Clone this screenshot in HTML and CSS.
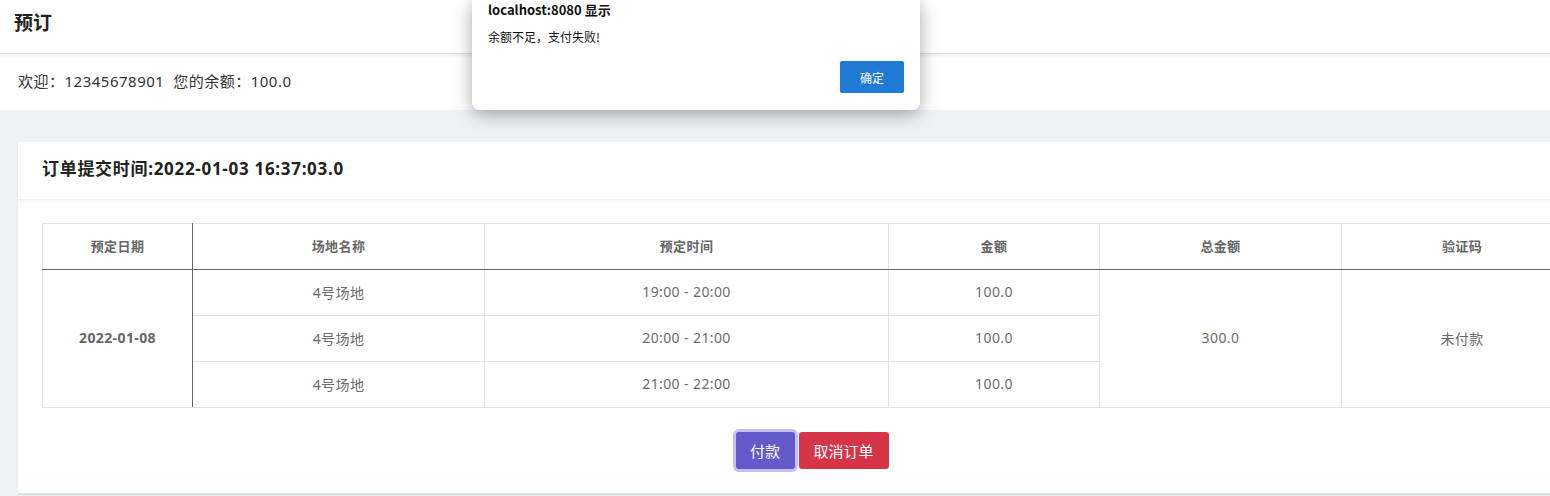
FILE: index.html
```html
<!DOCTYPE html>
<html lang="zh">
<head>
<meta charset="utf-8">
<title>预订</title>
<link rel="stylesheet" href="styles.css">
</head>
<body>
<div class="page">
  <header class="topbar"><h1 class="topbar-title">预订</h1></header>
  <div class="welcome">欢迎：12345678901&nbsp;&nbsp;您的余额：100.0</div>
  <main class="content">
    <section class="card">
      <div class="card-header"><h2 class="card-title">订单提交时间:2022-01-03 16:37:03.0</h2></div>
      <div class="card-body">
        <table class="orders">
          <colgroup>
            <col class="c1"><col class="c2"><col class="c3"><col class="c4"><col class="c5"><col class="c6">
          </colgroup>
          <thead>
            <tr><th class="first">预定日期</th><th>场地名称</th><th>预定时间</th><th>金额</th><th>总金额</th><th>验证码</th></tr>
          </thead>
          <tbody>
            <tr>
              <td rowspan="3" class="first date">2022-01-08</td>
              <td>4号场地</td><td>19:00 - 20:00</td><td>100.0</td>
              <td rowspan="3">300.0</td><td rowspan="3">未付款</td>
            </tr>
            <tr><td>4号场地</td><td>20:00 - 21:00</td><td>100.0</td></tr>
            <tr><td>4号场地</td><td>21:00 - 22:00</td><td>100.0</td></tr>
          </tbody>
        </table>
        <div class="actions">
          <button class="btn btn-pay">付款</button>
          <button class="btn btn-cancel">取消订单</button>
        </div>
      </div>
    </section>
  </main>
</div>
<div class="alert">
  <div class="alert-title">localhost:8080 显示</div>
  <div class="alert-msg">余额不足，支付失败!</div>
  <div class="alert-foot"><button class="alert-ok">确定</button></div>
</div>
</body>
</html>
```
FILE: styles.css
```css
html, body {
  margin: 0;
  padding: 0;
  overflow: hidden;
}
body {
  font-family: "Noto Sans", "Noto Sans CJK SC", sans-serif;
  color: #333;
  background: #eef2f6;
  width: 1550px;
  height: 496px;
  position: relative;
}
.page {
  width: 1640px;
}
.topbar {
  height: 54px;
  box-sizing: border-box;
  background: #fff;
  border-bottom: 1px solid #ddd;
  box-shadow: 0 2px 3px rgba(0,0,0,0.06);
  padding: 9px 0 0 14px;
  position: relative;
  z-index: 1;
}
.topbar-title {
  margin: 0;
  font-size: 19px;
  line-height: 26px;
  font-weight: 700;
  color: #222;
  font-family: "Noto Sans CJK SC", sans-serif;
}
.welcome {
  height: 56px;
  box-sizing: border-box;
  background: #fff;
  padding: 16px 0 0 18px;
  line-height: 22px;
  font-size: 15px;
  letter-spacing: 0.5px;
  color: #333;
}
.content {
  padding: 32px 0 0 18px;
}
.card {
  width: 1588px;
  background: #fff;
  box-shadow: 0 2px 1px rgba(0,0,0,0.08);
}
.card-header {
  height: 58px;
  box-sizing: border-box;
  padding: 15px 0 0 24px;
  box-shadow: 0 2px 3px rgba(0,0,0,0.04);
  border-bottom: 1px solid #f2f2f2;
}
.card-title {
  margin: 0;
  font-size: 17px;
  line-height: 24px;
  font-weight: 700;
  letter-spacing: 0.7px;
  color: #222;
}
.card-body {
  padding: 23px 24px 24px 24px;
}
.orders {
  border-collapse: collapse;
  width: 1540px;
  table-layout: fixed;
  font-size: 14px;
  letter-spacing: 0.4px;
  color: #6b6b6b;
}
.c1 { width: 150px; }
.c2 { width: 292px; }
.c3 { width: 404px; }
.c4 { width: 211px; }
.c5 { width: 242px; }
.c6 { width: 241px; }
.orders th, .orders td {
  border: 1px solid #dee2e6;
  text-align: center;
  vertical-align: middle;
  padding: 0 0 2px 0;
  height: 43px;
}
.orders th {
  font-size: 13px;
  font-weight: 700;
  color: #666;
  border-bottom: 1px solid #666;
}
.orders .first {
  border-right: 1px solid #666;
}
.orders .date {
  font-weight: 700;
  color: #666;
}
.actions {
  display: flex;
  justify-content: center;
  gap: 4px;
  padding-top: 24px;
}
.btn {
  border: 0;
  border-radius: 3px;
  color: #fff;
  font-size: 15px;
  font-family: "Noto Sans CJK SC", sans-serif;
  height: 37px;
  padding: 0 12px;
  cursor: pointer;
}
.btn-pay {
  background: #6259ca;
  box-shadow: 0 0 0 3px #c5c0f2;
  width: 59px;
}
.btn-cancel {
  background: #d63447;
  width: 90px;
}
.alert {
  position: absolute;
  left: 472px;
  top: 0;
  width: 448px;
  height: 110px;
  background: #fff;
  border-radius: 0 0 8px 8px;
  box-shadow: 0 4px 18px rgba(0,0,0,0.35);
  box-sizing: border-box;
  padding: 1px 16px 0 16px;
  z-index: 5;
  font-family: "Noto Sans CJK SC", sans-serif;
  color: #111;
}
.alert-title {
  font-size: 13px;
  font-weight: 700;
  line-height: 18px;
}
.alert-msg {
  font-size: 12px;
  margin-top: 10px;
  line-height: 16px;
}
.alert-foot {
  display: flex;
  justify-content: flex-end;
  margin-top: 16px;
}
.alert-ok {
  width: 64px;
  height: 32px;
  border: 0;
  border-radius: 2px;
  background: #1f7ad6;
  color: #fff;
  font-size: 12px;
  font-family: "Noto Sans CJK SC", sans-serif;
}
```
